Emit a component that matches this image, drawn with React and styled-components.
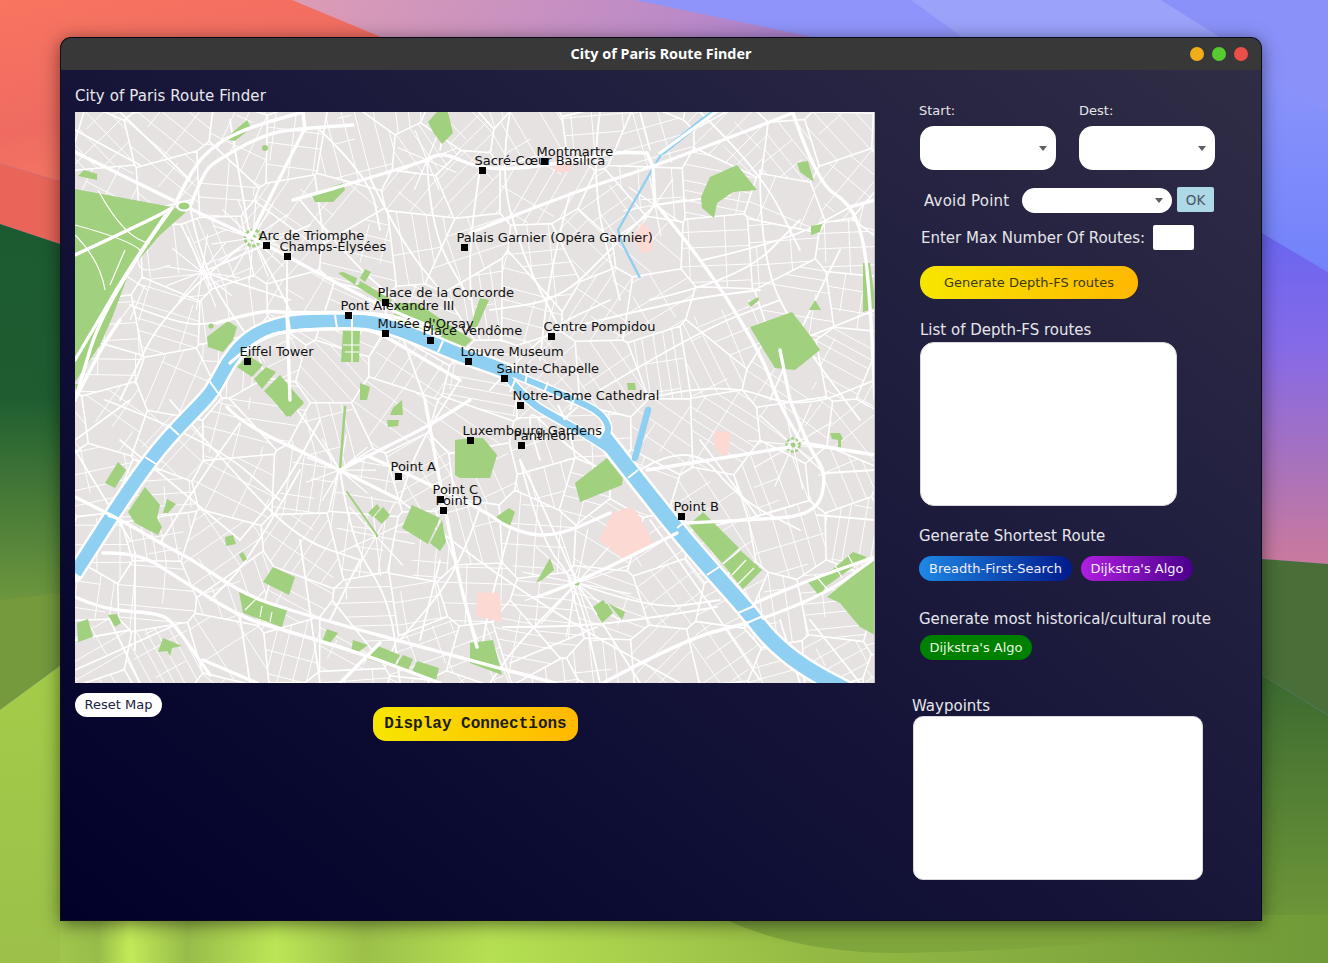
import React from "react";
import styled, { createGlobalStyle } from "styled-components";

const GlobalStyle = createGlobalStyle`
  html, body { margin: 0; padding: 0; background: #7d9f3c; }
  #root { width: 1328px; height: 963px; overflow: hidden; }
  * { box-sizing: border-box; }
`;

const UI = `"DejaVu Sans", "Liberation Sans", sans-serif`;

const Desktop = styled.div`
  position: relative;
  width: 1328px;
  height: 963px;
  overflow: hidden;
  font-family: ${UI};
`;
const Wallpaper = styled.svg`
  position: absolute;
  inset: 0;
  display: block;
`;
const Win = styled.div`
  position: absolute;
  left: 60px;
  top: 37px;
  width: 1202px;
  height: 884px;
  border-radius: 11px 11px 0 0;
  overflow: hidden;
  display: flex;
  flex-direction: column;
  background: linear-gradient(38deg, #01012a 0%, #0f0e34 32%, #1f1e3e 66%, #302d46 100%);
  border: 1px solid rgba(10, 10, 20, 0.8);
`;
const WinShadow = styled.div`
  position: absolute;
  left: 60px;
  top: 37px;
  width: 1202px;
  height: 884px;
  border-radius: 11px 11px 0 0;
  box-shadow: 0 3px 18px rgba(0, 0, 0, 0.5);
`;
const TitleBar = styled.div`
  position: relative;
  flex: none;
  height: 32px;
  display: flex;
  align-items: center;
  justify-content: center;
  padding-bottom: 2px;
  background: #383838;
  color: #fff;
  font: 700 14.35px "Noto Sans", "Open Sans", sans-serif;
`;
const Lights = styled.div`
  position: absolute;
  right: 13px;
  top: 9px;
  display: flex;
  gap: 8px;
`;
const Light = styled.span`
  width: 14px;
  height: 14px;
  border-radius: 50%;
  background: ${(p) => p.$c};
`;
const Body = styled.div`
  flex: 1;
  display: flex;
  min-height: 0;
`;
const LeftCol = styled.div`
  flex: none;
  width: 851px;
  padding-left: 14px;
`;
const Heading = styled.div`
  height: 42px;
  display: flex;
  align-items: center;
  padding-top: 10px;
  color: #e8e8ec;
  font-size: 15px;
  letter-spacing: 0.1px;
`;
const MapFrame = styled.div`
  position: relative;
  width: 800px;
  height: 571px;
  background: #e5e2e1;
  overflow: hidden;
`;
const MapArt = styled.svg`
  display: block;
`;
const Pin = styled.div`
  position: absolute;
  width: 7px;
  height: 7px;
  background: #000;
`;
const PinLabel = styled.span`
  position: absolute;
  left: -4px;
  top: -14px;
  white-space: nowrap;
  color: #111;
  font-size: 13px;
  line-height: 16px;
`;
const MapFooter = styled.div`
  display: flex;
  align-items: flex-start;
`;
const ResetButton = styled.button`
  margin-top: 10px;
  width: 87px;
  height: 24px;
  padding: 0 0 2px;
  border: none;
  border-radius: 12px;
  background: #fff;
  color: #1a2440;
  font: 13px ${UI};
`;
const DisplayButton = styled.button`
  margin: 24px 0 0 211px;
  width: 205px;
  height: 34px;
  padding: 0;
  border: none;
  border-radius: 13px;
  background: linear-gradient(90deg, #f7e600, #ffb800);
  color: #1c1c10;
  font: 700 16px "Liberation Mono", monospace;
`;
const RightCol = styled.div`
  flex: 1;
  display: flex;
  flex-direction: column;
  align-items: flex-start;
  padding-top: 33px;
  color: #e6e6ea;
  font-size: 15px;
`;
const PickRow = styled.div`
  display: grid;
  grid-template-columns: 159px 136px;
  margin-left: 8px;
`;
const Field = styled.div`
  display: flex;
  flex-direction: column;
  gap: 7px;
`;
const SmallLabel = styled.div`
  height: 16px;
  margin-left: ${(p) => p.$ml || 0}px;
  font-size: 13px;
  line-height: 16px;
`;
const Dropdown = styled.div`
  position: relative;
  width: ${(p) => p.$w}px;
  height: ${(p) => p.$h}px;
  background: #fff;
  border-radius: ${(p) => p.$r}px;
  &::after {
    content: "";
    position: absolute;
    right: ${(p) => p.$ar}px;
    top: 50%;
    margin-top: -2px;
    border: 4.5px solid transparent;
    border-top: 5px solid #5f5f5f;
    border-bottom: 0;
  }
`;
const AvoidRow = styled.div`
  display: flex;
  align-items: center;
  margin: 17px 0 0 12px;
  height: 26px;
`;
const AvoidLabel = styled.span`
  width: 98px;
  padding-top: 2px;
  letter-spacing: 0.2px;
`;
const OkButton = styled.button`
  width: 37px;
  height: 25px;
  margin: -1px 0 0 5px;
  padding: 0;
  border: none;
  border-radius: 2px;
  background: #add8e6;
  color: #4a5560;
  font: 13.5px ${UI};
`;
const MaxRow = styled.div`
  display: flex;
  align-items: center;
  margin: 12px 0 0 9px;
  height: 25px;
`;
const MaxLabel = styled.span`
  width: 232px;
  white-space: nowrap;
`;
const MaxInput = styled.div`
  width: 41px;
  height: 25px;
  background: #fff;
  border-radius: 2px;
`;
const GoldButton = styled.button`
  margin: 16px 0 0 8px;
  width: 218px;
  height: 33px;
  padding: 0;
  border: none;
  border-radius: 16px;
  background: linear-gradient(90deg, #f7e600, #ffb800);
  color: #3a3a08;
  font: 13px ${UI};
`;
const Section = styled.div`
  height: 18px;
  line-height: 18px;
  white-space: nowrap;
  margin-top: ${(p) => p.$mt}px;
  margin-left: ${(p) => p.$ml}px;
`;
const TextBox = styled.div`
  background: #fff;
  width: ${(p) => p.$w}px;
  height: 164px;
  margin-top: ${(p) => p.$mt}px;
  margin-left: ${(p) => p.$ml}px;
  border-radius: ${(p) => p.$r}px;
  border: 1px solid #d8d8dc;
`;
const AlgoRow = styled.div`
  display: flex;
  gap: 9px;
  margin-top: ${(p) => p.$mt}px;
  margin-left: ${(p) => p.$ml}px;
`;
const AlgoButton = styled.button`
  width: ${(p) => p.$w}px;
  height: 25px;
  padding: 0;
  border: none;
  border-radius: 12.5px;
  color: ${(p) => p.$fg || "#f2eefc"};
  background: ${(p) => p.$bg};
  font: 13px ${UI};
`;

/* ---------- map geometry, in page coordinates (viewBox starts at 75,112) ---------- */
const smooth = (pts) => {
  let d = `M${pts[0][0]} ${pts[0][1]}`;
  for (let i = 1; i < pts.length - 1; i++) {
    const mx = (pts[i][0] + pts[i + 1][0]) / 2;
    const my = (pts[i][1] + pts[i + 1][1]) / 2;
    d += `Q${pts[i][0]} ${pts[i][1]} ${mx} ${my}`;
  }
  const l = pts[pts.length - 1];
  return d + `L${l[0]} ${l[1]}`;
};
const p = (s) => s.trim().split(/\s+/).map((q) => q.split(",").map(Number));

const PARKS = [
  "225,139 247,120 251,128 235,141", "78,176 84,170 97,174 97,180", "311,194 343,183 345,190 333,202 315,202",
  "437,112 448,112 453,133 442,144 433,132 428,122", "75,189 172,207 186,212 160,235 130,270 112,318 100,345 75,382",
  "75,384 83,384 77,396", "207,337 228,321 237,327 233,340 223,352 208,347",
  "237,367 248,355 263,365 252,377", "254,379 266,367 276,372 262,389", "264,391 280,375 304,403 290,417",
  "273,400 303,400 287,417", "338,273 343,272 357,278 355,285", "360,278 365,269 371,272 365,282", "355,285 365,284 392,300 388,306",
  "395,303 417,303 472,340 462,349 432,332 393,327", "470,327 480,298 489,300 477,327",
  "343,330 360,330 359,362 341,362", "360,383 370,387 367,400 360,400",
  "701,197 710,177 737,165 757,190 733,192 717,203 714,218 702,208", "797,163 808,161 814,182 800,172",
  "811,226 822,224 820,232 811,235", "863,263 870,263 875,300 875,308 863,312", "809,310 815,300 821,310",
  "748,303 758,297 759,300 751,307", "750,327 792,312 812,338 820,350 805,362 795,370 775,368 765,352",
  "627,383 635,383 636,390 628,390", "105,483 118,462 126,470 115,488",
  "128,512 145,487 160,505 157,518 162,527 158,535 135,523", "163,513 167,499 176,504 168,513",
  "225,537 233,535 236,544 226,546", "239,554 243,552 247,559 243,562", "263,582 273,567 295,577 289,595",
  "239,592 287,610 282,627 243,613", "322,642 327,629 338,633 330,643", "351,652 353,640 368,645 357,653",
  "362,657 378,646 400,655 393,667", "395,667 403,655 413,659 408,671", "412,672 417,661 439,668 436,680",
  "77,623 88,619 93,637 78,642", "108,615 117,614 121,623 115,627",
  "158,652 163,638 182,646 172,648 170,656 167,651", "368,513 377,504 380,508 373,517",
  "374,517 383,507 390,515 382,524", "402,528 412,505 440,518 428,544", "430,543 442,520 446,542 440,551",
  "455,440 470,438 483,438 497,455 490,478 460,478 455,475", "393,408 402,400 403,415 390,415",
  "387,420 399,420 398,426 388,427", "575,483 607,458 623,478 622,485 580,502",
  "689,525 703,512 739,548 722,563", "723,564 740,550 762,570 743,589 737,582",
  "496,517 509,508 515,512 510,526 498,520", "536,583 550,558 554,570 542,580",
  "593,607 603,600 607,605 598,615", "597,615 607,603 613,613 602,623", "608,603 625,612 622,620",
  "470,643 493,640 502,675 470,663", "827,597 875,558 875,635 860,627 840,603",
  "808,582 832,570 853,552 867,557 825,587 820,597",
  "830,433 840,433 843,439 841,440 841,449 838,449 838,440 832,439", "360,281 372,288 366,292 358,286",
];
const PINK = [
  "633,238 643,222 652,233 653,250 643,254", "554,163 572,163 570,172 555,172",
  "599,540 613,513 630,507 637,512 655,545 625,560", "477,592 500,593 502,622 476,616",
  "713,442 715,431 731,432 728,455 720,455",
];
const RIVER = p("75,573 115,510 152,457 180,425 207,398 217,383 228,362 243,343 263,330 291,322 330,321 365,321 393,327 430,342 460,355 490,365 505,371");
const RIVER2 = p("603,436 635,477 677,530 713,572 747,610 770,640 803,667 850,692");
const BRANCH_N = p("498,368 540,385 575,400 600,412 610,428 604,438");
const BRANCH_S = p("500,368 525,400 560,420 590,437 610,450");
const BRIDGES = [
  [108,516,119,519],[145,457,156,464],[168,425,179,435],[208,379,218,393],[288,316,290,330],[335,315,337,328],
  [352,313,352,329],[438,352,443,341],[628,478,638,470],[677,528,686,521],[707,575,719,567],[738,613,754,606],
  [747,623,763,616],[528,370,525,384],[548,382,543,396],[516,378,510,392],[575,396,570,410],[558,405,565,420],
];
const MAJOR = [
  "75,152 184,206 253,238 287,256 340,285 390,310 432,327", "75,255 150,220 172,208",
  "75,360 100,318 125,275 165,216", "177,200 193,167 217,143 250,127 303,112", "190,207 203,173 217,160 267,133 307,128 353,125",
  "305,128 260,217 250,238", "303,112 305,130", "427,160 370,178 293,200", "427,160 440,150 480,170 540,167 610,152 647,153",
  "470,233 570,193 653,167 793,113", "793,113 817,183 850,203 864,240 870,300 875,400", "850,207 875,200",
  "655,203 703,260 763,357 777,400 800,440", "653,167 655,205", "647,153 653,167", "660,153 716,112",
  "217,323 260,310 287,313 390,312 440,335", "230,363 260,337 293,330 360,328 380,333 420,357 460,380",
  "287,313 290,400", "75,497 127,523 160,543 193,560 240,592 287,610 480,663 555,683",
  "103,553 137,552 177,577 240,617 283,630 360,653 440,683", "75,597 103,610 160,613 175,625 210,675",
  "227,407 240,423 340,470 400,500", "340,470 400,440 430,425 470,400", "425,400 453,557 477,647", "370,457 480,507 510,530 553,538 610,513",
  "537,597 577,583 677,533", "687,523 750,520 817,515 827,473 810,450 790,400", "803,443 875,455", "647,470 790,447",
  "755,603 803,582 875,557", "763,618 820,598 875,558", "603,683 683,640 747,623", "203,660 257,683", "340,683 380,643",
  "75,400 100,350 120,320", "172,208 105,300 75,400", "790,400 780,350",
];
const MEDIUM = [
  "120,112 190,180", "75,130 140,165", "75,230 190,200", "250,238 230,120", "253,238 170,300 120,400", "253,238 300,330",
  "190,207 203,272 250,340", "203,272 290,300", "203,272 310,225", "130,305 180,325 217,323", "287,256 287,313",
  "300,200 350,260 395,300", "427,160 430,230 470,300", "370,178 400,240 440,290", "320,130 370,178 380,230",
  "440,150 448,112", "480,170 470,233 470,300 480,340", "510,112 500,170 520,250 560,330", "570,193 550,270 540,360",
  "600,112 590,180 620,300", "640,112 650,150", "700,112 760,170 800,250", "655,205 610,250 560,300 490,310", "655,205 730,195",
  "703,260 790,240 850,207", "650,300 740,280 800,220", "560,330 680,300 760,290", "600,390 700,330 780,300",
  "760,170 760,260 800,340 860,420", "840,250 800,330 770,400", "800,340 875,310", "640,400 720,380 800,410 875,380",
  "490,390 545,330 610,300", "460,380 420,440 400,500", "425,400 400,330", "320,420 290,480 240,540", "290,400 340,470",
  "170,400 240,480 300,540 360,560", "120,440 180,490 240,540", "105,400 210,440 280,500", "240,423 200,480 160,543",
  "300,470 250,560 210,600", "340,470 350,540 390,600 400,683", "400,500 450,540 520,590 600,640 680,683", "480,507 460,570 400,640",
  "520,460 540,540 577,583 600,683", "577,583 520,640 490,683", "577,583 640,683", "577,583 650,610 720,600", "577,583 540,500 520,460",
  "503,627 577,627 657,617 717,607", "510,663 597,627", "640,470 690,440 740,500 800,530", "700,440 760,520", "650,520 700,590 760,680",
  "780,640 830,683", "817,515 875,520", "827,473 875,470", "810,620 860,683", "780,620 800,683", "540,460 520,400 560,440 600,470",
  "300,540 320,683", "240,617 250,683", "110,620 140,683", "175,625 120,650 75,670", "135,552 135,650", "75,640 130,630",
  "130,540 75,450", "75,440 130,400", "360,560 330,620", "440,560 420,640", "510,530 490,600 480,660",
];
const STARS = [
  [253, 238, 42, 14, 0.3], [202, 272, 38, 12, 0.15], [577, 583, 55, 12, 0.2], [793, 445, 45, 10, 0.1],
  [427, 160, 32, 8, 0.4], [655, 205, 32, 8, 0.6], [376, 536, 40, 10, 0.2], [340, 470, 36, 9, 0.7],
];

/* Street texture: a Voronoi patchwork of districts, each with its own block grid. */
const buildStreets = () => {
  let seed = 90211;
  const r = () => {
    seed = (seed * 16807) % 2147483647;
    return seed / 2147483647;
  };
  const sites = [];
  for (let y = 80; y < 730; y += 58) {
    for (let x = 40; x < 920; x += 62) {
      sites.push([x + (r() - 0.5) * 46, y + (r() - 0.5) * 42]);
    }
  }
  const clip = (px, py, dx, dy, t0, t1, i, skip) => {
    const [sx, sy] = sites[i];
    for (let j = 0; j < sites.length; j++) {
      if (j === i || j === skip) continue;
      const nx = sites[j][0] - sx;
      const ny = sites[j][1] - sy;
      if (nx * nx + ny * ny > 40000) continue;
      const mx = (sites[j][0] + sx) / 2;
      const my = (sites[j][1] + sy) / 2;
      const den = dx * nx + dy * ny;
      const num = (mx - px) * nx + (my - py) * ny;
      if (Math.abs(den) < 1e-6) {
        if (num < 0) return null;
        continue;
      }
      const t = num / den;
      if (den > 0) t1 = Math.min(t1, t);
      else t0 = Math.max(t0, t);
      if (t0 >= t1) return null;
    }
    return [t0, t1];
  };
  const seg = (px, py, dx, dy, a, b) =>
    `M${(px + dx * a).toFixed(1)} ${(py + dy * a).toFixed(1)}L${(px + dx * b).toFixed(1)} ${(py + dy * b).toFixed(1)}`;
  let streets = "";
  let collectors = "";
  sites.forEach(([sx, sy], i) => {
    const th = Math.sin(sx * 0.009 + 0.5) * 0.8 + Math.cos(sy * 0.011) * 0.8 + (r() - 0.5) * 0.7 + (r() > 0.5 ? 1.57 : 0);
    const dx = Math.cos(th);
    const dy = Math.sin(th);
    const spacing = 11 + r() * 9;
    for (let o = -110; o < 110; o += spacing * (0.7 + r() * 0.7)) {
      if (r() < 0.1) continue;
      const px = sx - dy * o;
      const py = sy + dx * o;
      const c = clip(px, py, dx, dy, -130, 130, i, -1);
      if (c) streets += seg(px, py, dx, dy, c[0], c[1]);
    }
    const cross = 17 + r() * 16;
    for (let o = -110; o < 110; o += cross * (0.7 + r() * 0.7)) {
      if (r() < 0.2) continue;
      const px = sx + dx * o;
      const py = sy + dy * o;
      const c = clip(px, py, -dy, dx, -130, 130, i, -1);
      if (c) {
        const len = c[1] - c[0];
        const a = c[0] + (r() < 0.5 ? 0 : len * r() * 0.5);
        const b = r() < 0.5 ? c[1] : a + (c[1] - a) * (0.4 + r() * 0.6);
        streets += seg(px, py, -dy, dx, a, b);
      }
    }
    sites.forEach(([qx, qy], j) => {
      if (j <= i) return;
      const nx = qx - sx;
      const ny = qy - sy;
      if (nx * nx + ny * ny > 40000) return;
      const l = Math.hypot(nx, ny);
      const c = clip((sx + qx) / 2, (sy + qy) / 2, -ny / l, nx / l, -200, 200, i, j);
      if (c) collectors += seg((sx + qx) / 2, (sy + qy) / 2, -ny / l, nx / l, c[0], c[1]);
    });
  });
  return { streets, collectors };
};
const { streets: STREETS, collectors: COLLECTORS } = buildStreets();

const starsPath = STARS.map(([x, y, len, n, o]) =>
  Array.from({ length: n }, (_, i) => {
    const a = o + (i * Math.PI * 2) / n;
    return `M${x} ${y}L${(x + Math.cos(a) * len).toFixed(1)} ${(y + Math.sin(a) * len).toFixed(1)}`;
  }).join("")
).join("");

const ParisMap = () => (
  <MapArt width="800" height="571" viewBox="75 112 800 571">
    <rect x="75" y="112" width="800" height="571" fill="#e5e2e1" />
    <path d={STREETS} stroke="#fff" strokeWidth="0.95" fill="none" />
    <path d={COLLECTORS} stroke="#fff" strokeWidth="1.6" fill="none" strokeLinecap="round" />
    <path d={starsPath} stroke="#fff" strokeWidth="1.2" fill="none" />
    <g stroke="#fff" strokeWidth="1.8" fill="none" strokeLinejoin="round" strokeLinecap="round">
      {MEDIUM.map((m) => <path key={m} d={smooth(p(m))} />)}
    </g>
    {PARKS.map((g) => <polygon key={g} points={g} fill="#a1d07f" />)}
    {PINK.map((g) => <polygon key={g} points={g} fill="#fdd9d3" />)}
    <g stroke="#fff" fill="none" strokeWidth="1.2">
      <path d="M75 225Q130 240 140 250Q130 280 170 265M98 190Q125 240 150 243M75 235Q100 260 105 290M110 285L125 250M145 285L130 320M125 275L148 290M135 300L112 330M352 331V362M343 345H360M345 352H359" />
      <path d="M740 550L723 564M746 560L732 575M754 568L737 585M815 575L828 590M835 565L842 578M848 555L855 568M262 606L260 617M272 612L270 622M245 610L265 590" />
    </g>
    <g fill="none" stroke="#a1d07f" strokeLinecap="round">
      <path d="M345 407L340 470" strokeWidth="2.6" />
      <path d="M347 492L377 535" strokeWidth="2" />
    </g>
    <g fill="#a1d07f">
      <circle cx="253" cy="238" r="3.4" />
      <circle cx="265" cy="148" r="3" />
      <circle cx="211" cy="326" r="2.6" />
      <circle cx="577" cy="583" r="2.6" />
      <circle cx="793" cy="445" r="2.6" />
      <circle cx="377" cy="536" r="1.3" />
    </g>
    <circle cx="253" cy="238" r="8" fill="none" stroke="#a1d07f" strokeWidth="3" strokeDasharray="3.4 1.6" />
    <circle cx="793" cy="445" r="6.6" fill="none" stroke="#a1d07f" strokeWidth="2.2" strokeDasharray="3.2 1.6" />
    <g fill="none" stroke="#fff" strokeLinecap="round" strokeLinejoin="round">
      <path d={smooth(RIVER)} strokeWidth="18" />
      <path d={smooth(RIVER2)} strokeWidth="20" />
      <path d={smooth(BRANCH_N)} strokeWidth="9" />
      <path d={smooth(BRANCH_S)} strokeWidth="10" />
    </g>
    <g fill="none" stroke="#8fcff2" strokeLinejoin="round">
      <path d={smooth(RIVER)} strokeWidth="13" />
      <path d={smooth(RIVER2)} strokeWidth="15" />
      <path d={smooth(BRANCH_N)} strokeWidth="6" />
      <path d={smooth(BRANCH_S)} strokeWidth="7" />
      <path d="M715 112L703 120L662 153" strokeWidth="5" />
      <path d="M662 153L653 168L618 230L622 243L640 278" strokeWidth="2.4" />
      <path d="M648 410L635 458" strokeWidth="6.5" strokeLinecap="round" />
    </g>
    <g stroke="#fff" strokeWidth="2" strokeLinecap="butt">
      {BRIDGES.map((b) => <line key={b.join()} x1={b[0]} y1={b[1]} x2={b[2]} y2={b[3]} />)}
    </g>
    <g stroke="#fff" strokeWidth="3.4" fill="none" strokeLinejoin="round" strokeLinecap="round">
      {MAJOR.map((m) => <path key={m} d={smooth(p(m))} />)}
    </g>
    <ellipse cx="184" cy="206" rx="8" ry="5.5" fill="#fff" />
    <ellipse cx="184" cy="206" rx="5.5" ry="3.6" fill="#a1d07f" />
    <rect x="874" y="112" width="1" height="571" fill="#bdbdbd" />
  </MapArt>
);

const PINS = [
  ["Arc de Triomphe", 266, 245], ["Champs-Élysées", 287, 256], ["Palais Garnier (Opéra Garnier)", 464, 247],
  ["Sacré-Cœur Basilica", 482, 170], ["Montmartre", 544, 161], ["Place de la Concorde", 385, 302],
  ["Pont Alexandre III", 348, 315], ["Musée d'Orsay", 385, 333], ["Place Vendôme", 430, 340],
  ["Centre Pompidou", 551, 336], ["Louvre Museum", 468, 361], ["Sainte-Chapelle", 504, 378],
  ["Notre-Dame Cathedral", 520, 405], ["Luxembourg Gardens", 470, 440], ["Panthéon", 521, 445],
  ["Eiffel Tower", 247, 361], ["Point A", 398, 476], ["Point C", 440, 499], ["Point D", 443, 510], ["Point B", 681, 516],
];

const Backdrop = () => (
  <Wallpaper width="1328" height="963" viewBox="0 0 1328 963">
    <defs>
      <linearGradient id="pk" x1="0" x2="1" y1="0" y2="0.15">
        <stop offset="0" stopColor="#dc9cb4" /><stop offset="0.55" stopColor="#bb8ac8" /><stop offset="1" stopColor="#8e74d8" />
      </linearGradient>
      <linearGradient id="co" x1="0" x2="0.5" y1="0" y2="1">
        <stop offset="0" stopColor="#f8755f" /><stop offset="0.5" stopColor="#ef6b62" /><stop offset="1" stopColor="#fb8260" />
      </linearGradient>
      <linearGradient id="pr" x1="0" x2="0" y1="0" y2="1">
        <stop offset="0" stopColor="#6a66f2" /><stop offset="0.35" stopColor="#866ae6" /><stop offset="0.7" stopColor="#a872bc" /><stop offset="1" stopColor="#cb7a9c" />
      </linearGradient>
      <linearGradient id="bl" x1="0" x2="0" y1="0" y2="1">
        <stop offset="0" stopColor="#8a94fb" /><stop offset="1" stopColor="#7382fa" />
      </linearGradient>
      <linearGradient id="lg" x1="0" x2="0" y1="0" y2="1">
        <stop offset="0" stopColor="#1c5a30" /><stop offset="0.46" stopColor="#1f5d30" /><stop offset="1" stopColor="#6d963e" />
      </linearGradient>
      <linearGradient id="lm" x1="0" x2="0" y1="0" y2="1">
        <stop offset="0" stopColor="#a4cc48" /><stop offset="1" stopColor="#9cc04a" />
      </linearGradient>
      <linearGradient id="rg" x1="0" x2="0" y1="0" y2="1">
        <stop offset="0" stopColor="#3c6a30" /><stop offset="1" stopColor="#769e3a" />
      </linearGradient>
      <linearGradient id="bt" x1="0" x2="1" y1="0" y2="0">
        <stop offset="0" stopColor="#a0c64c" /><stop offset="0.03" stopColor="#98bc4a" /><stop offset="0.055" stopColor="#c2ea58" />
        <stop offset="0.1" stopColor="#98bc4a" /><stop offset="0.17" stopColor="#bce656" /><stop offset="0.24" stopColor="#9cc04a" />
        <stop offset="0.34" stopColor="#b6e052" /><stop offset="0.6" stopColor="#94b944" /><stop offset="1" stopColor="#6f9a38" />
      </linearGradient>
    </defs>
    <rect width="1328" height="963" fill="#8f94fa" />
    <polygon points="292,0 635,0 813,37 1000,220 400,220" fill="url(#pk)" />
    <polygon points="911,0 1161,0 1220,37 962,37" fill="#9aa2fa" />
    <polygon points="1161,0 1328,0 1328,112 1262,70 1220,37" fill="#8a92fa" />
    <polygon points="1262,70 1328,112 1328,272 1262,233" fill="url(#bl)" />
    <polygon points="0,0 292,0 381,37 420,220 60,181 0,163" fill="url(#co)" />
    <polygon points="0,163 60,181 60,244 0,224" fill="#e9655a" />
    <polygon points="1262,233 1328,272 1328,564 1262,559" fill="url(#pr)" />
    <polygon points="0,224 60,244 60,600 0,600" fill="url(#lg)" />
    <polygon points="0,600 60,593 60,666 0,710" fill="#749a3c" />
    <polygon points="0,710 60,666 60,963 0,963" fill="url(#lm)" />
    <polygon points="1262,559 1328,564 1328,715 1262,675" fill="#496e38" />
    <polygon points="1262,675 1328,715 1328,963 1262,963" fill="url(#rg)" />
    <rect x="60" y="915" width="1268" height="48" fill="url(#bt)" />
    <path d="M729 921Q800 953 900 953Q1100 950 1262 921Z" fill="#7fa63c" />
  </Wallpaper>
);

export default function App() {
  return (
    <>
      <GlobalStyle />
      <Desktop>
        <Backdrop />
        <WinShadow />
        <Win>
          <TitleBar>
            City of Paris Route Finder
            <Lights>
              <Light $c="#f2ad1b" />
              <Light $c="#57c931" />
              <Light $c="#ec4e4a" />
            </Lights>
          </TitleBar>
          <Body>
            <LeftCol>
              <Heading>City of Paris Route Finder</Heading>
              <MapFrame>
                <ParisMap />
                {PINS.map(([name, x, y]) => (
                  <Pin key={name} style={{ left: x - 78.5, top: y - 115.5 }}>
                    <PinLabel>{name}</PinLabel>
                  </Pin>
                ))}
              </MapFrame>
              <MapFooter>
                <ResetButton>Reset Map</ResetButton>
                <DisplayButton>Display Connections</DisplayButton>
              </MapFooter>
            </LeftCol>
            <RightCol>
              <PickRow>
                <Field>
                  <SmallLabel $ml={-1}>Start:</SmallLabel>
                  <Dropdown $w={136} $h={44} $r={14} $ar={9} />
                </Field>
                <Field>
                  <SmallLabel>Dest:</SmallLabel>
                  <Dropdown $w={136} $h={44} $r={14} $ar={9} />
                </Field>
              </PickRow>
              <AvoidRow>
                <AvoidLabel>Avoid Point</AvoidLabel>
                <Dropdown $w={150} $h={25} $r={12.5} $ar={9} />
                <OkButton>OK</OkButton>
              </AvoidRow>
              <MaxRow>
                <MaxLabel>Enter Max Number Of Routes:</MaxLabel>
                <MaxInput />
              </MaxRow>
              <GoldButton>Generate Depth-FS routes</GoldButton>
              <Section $mt={22} $ml={8}>List of Depth-FS routes</Section>
              <TextBox $w={257} $mt={3} $ml={8} $r={14} />
              <Section $mt={21} $ml={7}>Generate Shortest Route</Section>
              <AlgoRow $mt={11} $ml={7}>
                <AlgoButton $w={153} $bg="linear-gradient(90deg, #1e88e5, #001a8c)">Breadth-First-Search</AlgoButton>
                <AlgoButton $w={112} $bg="linear-gradient(90deg, #b01fe0, #4a008c)">Dijkstra's Algo</AlgoButton>
              </AlgoRow>
              <Section $mt={29} $ml={7}>Generate most historical/cultural route</Section>
              <AlgoRow $mt={7} $ml={8}>
                <AlgoButton $w={112} $bg="#008000" $fg="#e8f8e0">Dijkstra's Algo</AlgoButton>
              </AlgoRow>
              <Section $mt={37} $ml={0}>Waypoints</Section>
              <TextBox $w={290} $mt={1} $ml={1} $r={10} />
            </RightCol>
          </Body>
        </Win>
      </Desktop>
    </>
  );
}
